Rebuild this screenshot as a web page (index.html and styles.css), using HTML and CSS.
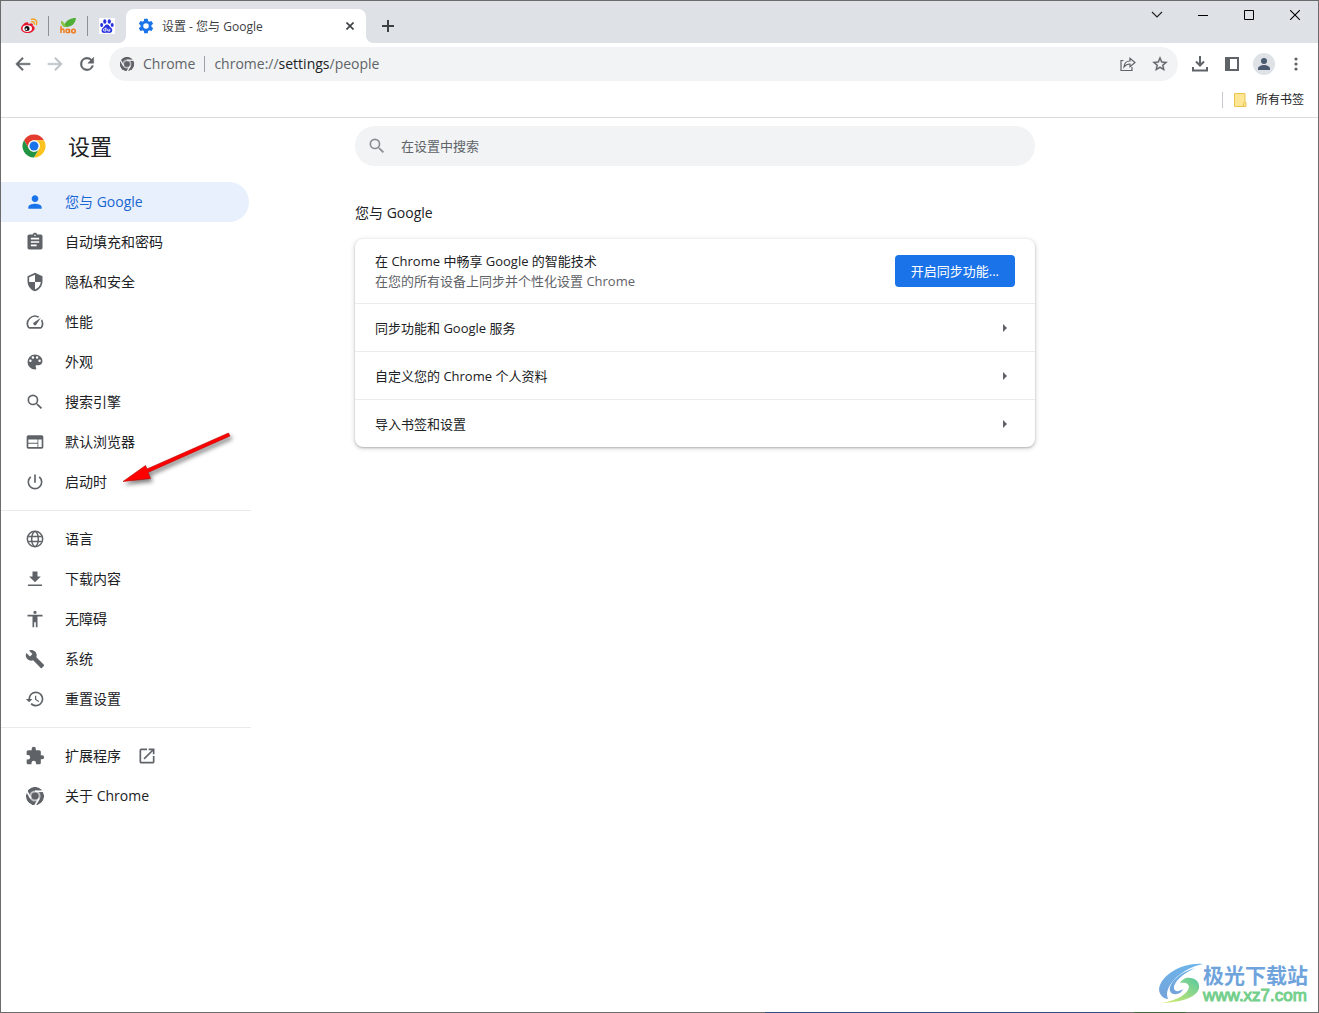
FILE: index.html
```html
<!DOCTYPE html>
<html lang="zh-CN">
<head>
<meta charset="utf-8">
<title>设置 - 您与 Google</title>
<link rel="stylesheet" href="styles.css">
</head>
<body>
<div class="window">
  <header class="tabstrip">
    <div class="pinned">
      <button class="pin" aria-label="微博">
        <svg width="18" height="18" viewBox="0 0 18 18"><path d="M1 11.500c0-3 5-7.500 7-6 .8.500.3 1.500.3 1.500s3.800-1.500 4.500.2c.3.800-.2 1.600-.2 1.600 1.600.4 2 1.300 2 2.400 0 2.500-3 4.800-7 4.800-3.600 0-6.600-1.800-6.600-4.500z" fill="#e6162d"/><ellipse cx="7.300" cy="11.600" rx="4.700" ry="3.300" fill="#fff"/><circle cx="7" cy="11.600" r="2.500" fill="#111"/><circle cx="6.300" cy="12.200" r=".9" fill="#fff"/><path d="M11.500 2.200c4-1 6 2 4.800 5.500M11.800 4.800c2-.4 2.700.8 2.300 2.200" fill="none" stroke="#f5a01d" stroke-width="1.400" stroke-linecap="round"/></svg>
      </button>
      <button class="pin" aria-label="hao">
        <svg width="18" height="18" viewBox="0 0 18 18"><path d="M5 8c3-5 6-7 12-7-.5 5-4 9-10 9-3 0-4.500-2-5-6 2 .5 3 2 3 4z" fill="#4fae35"/><path d="M2 4c2.500.5 4 2.500 5 6-3 0-4.500-2-5-6z" fill="#8cc63f"/><path d="M2 9v7M2 13.500c0-2 3-2 3 0V16M10.500 12v4" fill="none" stroke="#f07c1e" stroke-width="1.500"/><circle cx="8.700" cy="14" r="1.700" fill="none" stroke="#f07c1e" stroke-width="1.500"/><circle cx="14.500" cy="14" r="1.800" fill="none" stroke="#f07c1e" stroke-width="1.500"/></svg>
      </button>
      <button class="pin" aria-label="百度">
        <svg width="16" height="16" viewBox="0 0 16 16"><rect width="16" height="16" rx="1" fill="#fff"/><g fill="#2932e1"><ellipse cx="5.800" cy="3.500" rx="1.600" ry="2.200"/><ellipse cx="10.300" cy="3.500" rx="1.600" ry="2.200"/><ellipse cx="2.700" cy="6.900" rx="1.500" ry="2"/><ellipse cx="13.200" cy="6.900" rx="1.500" ry="2"/><path d="M8 6.500c2 0 2.500 2 4 3.300 2.500 2.200 1 5.200-1.500 5.200-1.500 0-3.500-.4-5 0-2.800.4-4-3-1.500-5.200C5.500 8.500 6 6.500 8 6.500z"/></g><path d="M7 9.500V13H5.500a1 1 0 0 1 0-2.200H7M8.800 10.800V13h2v-2.200" fill="none" stroke="#fff" stroke-width=".9"/></svg>
      </button>
    </div>
    <div class="tab">
      <svg class="tab-icon" width="16" height="16" viewBox="1 1 22 22"><path fill="#1a73e8" d="M19.400 13c0-.3.100-.6.100-1s0-.7-.1-1l2.100-1.600c.2-.2.200-.4.100-.7l-2-3.400c-.1-.2-.4-.3-.6-.2l-2.500 1c-.5-.4-1.100-.7-1.700-1l-.4-2.600c0-.3-.2-.5-.5-.5h-4c-.2 0-.5.200-.5.500L9.100 5.100c-.6.300-1.200.6-1.700 1l-2.500-1c-.2-.1-.5 0-.6.200l-2 3.400c-.1.300-.1.500.1.700L4.600 11c0 .3-.1.700-.1 1s0 .7.100 1l-2.200 1.600c-.1.200-.2.400-.1.700l2 3.400c.1.200.4.300.6.200l2.500-1c.5.400 1.100.7 1.700 1l.3 2.600c.1.300.3.500.6.500h4c.2 0 .5-.2.500-.5l.4-2.600c.6-.3 1.200-.6 1.700-1l2.500 1c.2.100.5 0 .6-.2l2-3.400c.1-.3.100-.5-.1-.7zM12 15.800a3.800 3.800 0 1 1 0-7.600 3.800 3.800 0 0 1 0 7.600z"/></svg>
      <span class="tab-title">设置 - 您与 Google</span>
      <button class="tab-close" aria-label="关闭标签页"><svg width="8" height="8" viewBox="0 0 8 8"><path d="M.5.5l7 7M7.500.5l-7 7" stroke="#3c4043" stroke-width="1.600"/></svg></button>
    </div>
    <button class="new-tab" aria-label="新标签页"><svg width="12" height="12" viewBox="0 0 12 12"><path d="M6 0v12M0 6h12" stroke="#3c4043" stroke-width="2"/></svg></button>
    <div class="controls">
      <button aria-label="搜索标签页"><svg width="12" height="8" viewBox="0 0 12 8"><path d="M1 1l5 5 5-5" fill="none" stroke="#222" stroke-width="1.200"/></svg></button>
      <button aria-label="最小化"><svg width="10" height="10" viewBox="0 0 10 10"><path d="M0 5.500h10" stroke="#000"/></svg></button>
      <button aria-label="最大化"><svg width="10" height="10" viewBox="0 0 10 10"><path d="M.5.5h9v9h-9z" fill="none" stroke="#000"/></svg></button>
      <button aria-label="关闭"><svg width="10" height="10" viewBox="0 0 10 10"><path d="M0 0l10 10M10 0L0 10" stroke="#000" stroke-width="1.100"/></svg></button>
    </div>
  </header>

  <div class="toolbar">
    <button class="tool" aria-label="后退"><svg width="20" height="20" viewBox="0 0 24 24"><path fill="#5f6368" stroke="#5f6368" stroke-width=".5" d="M20.500 11H7l5.600-5.600L11.200 4l-8 8 8 8 1.400-1.400L7 13h13.500z"/></svg></button>
    <button class="tool" aria-label="前进"><svg width="20" height="20" viewBox="0 0 24 24"><path fill="#bdc1c6" stroke="#bdc1c6" stroke-width=".5" d="M3.500 11H17l-5.600-5.600L12.800 4l8 8-8 8-1.400-1.400L17 13H3.500z"/></svg></button>
    <button class="tool" aria-label="重新加载"><svg width="20" height="20" viewBox="0 0 24 24"><path fill="#5f6368" stroke="#5f6368" stroke-width=".6" d="M17.650 6.350A7.958 7.958 0 0 0 12 4a8 8 0 1 0 7.730 10h-2.080A6 6 0 1 1 12 6c1.660 0 3.140.69 4.220 1.780L13 11h7V4z"/></svg></button>
    <div class="omnibox">
      <svg width="16" height="16" viewBox="0 0 24 24"><use href="#chrome-mono"/></svg>
      <span class="chip">Chrome</span>
      <div class="address"><span class="url">chrome://<b>settings</b>/people</span></div>
      <button class="tool" aria-label="分享"><svg width="16" height="16" viewBox="0 0 16 16"><path d="M3.500 4.500H1v10h11V11M4 11c.3-4 2.500-6 6-6V2.300l5 4.200-5 4.200V8C7 8 5.500 9 4 11z" fill="none" stroke="#5f6368" stroke-width="1.200"/></svg></button>
      <button class="tool" aria-label="收藏"><svg width="18" height="18" viewBox="0 0 24 24"><path fill="#5f6368" stroke="#5f6368" stroke-width=".4" d="M22 9.240l-7.190-.62L12 2 9.190 8.630 2 9.240l5.460 4.730L5.820 21 12 17.270 18.180 21l-1.630-7.030zM12 15.400l-3.760 2.270 1-4.280-3.320-2.880 4.380-.38L12 6.100l1.710 4.040 4.380.38-3.320 2.880 1 4.280z"/></svg></button>
    </div>
    <button class="tool" aria-label="下载"><svg width="18" height="18" viewBox="0 0 18 18"><path d="M9 1v9M5 6.500l4 4 4-4M2 12v3.500h14V12" fill="none" stroke="#5f6368" stroke-width="2"/></svg></button>
    <button class="tool" aria-label="侧边栏"><svg width="14" height="14" viewBox="0 0 14 14"><path d="M1 1h12v12H1z" fill="none" stroke="#5f6368" stroke-width="2"/><path d="M0 0h5v14H0z" fill="#5f6368"/></svg></button>
    <button class="tool" aria-label="个人资料"><svg width="22" height="22" viewBox="0 0 22 22"><circle cx="11" cy="11" r="11" fill="#dee1e6"/><circle cx="11" cy="8" r="3" fill="#4b5a70"/><path d="M5 17v-1.500c0-2.300 3.500-3.500 6-3.500s6 1.200 6 3.500V17z" fill="#4b5a70"/></svg></button>
    <button class="tool" aria-label="更多"><svg width="4" height="14" viewBox="0 0 4 14"><g fill="#5f6368"><circle cx="2" cy="2" r="1.600"/><circle cx="2" cy="7" r="1.600"/><circle cx="2" cy="12" r="1.600"/></g></svg></button>
  </div>

  <div class="bookmarks">
    <button class="all-bookmarks"><svg width="13" height="14" viewBox="0 0 13 14"><path d="M.5.500h10.500v9h1v4H.5z" fill="#ffe694" stroke="#eac54f"/><path d="M9.500 13V10.500q0-1 1.200-1" fill="none" stroke="#eac54f"/></svg>所有书签</button>
  </div>

  <div class="page">
    <aside class="sidebar">
      <div class="brand">
        <svg width="24" height="24" viewBox="0 0 48 48"><circle cx="24" cy="24" r="23" fill="#fff"/><path d="M4.080 12.500A23 23 0 0 1 43.920 12.500H24A11.500 11.500 0 0 0 14.040 29.750z" fill="#e33b2e"/><path d="M43.920 12.500A23 23 0 0 1 24 47l9.960-17.250A11.500 11.500 0 0 0 24 12.500z" fill="#fcc31e"/><path d="M24 47A23 23 0 0 1 4.080 12.500l9.960 17.250a11.500 11.500 0 0 0 19.920 0z" fill="#229342"/><circle cx="24" cy="24" r="11.500" fill="#fff"/><circle cx="24" cy="24" r="9" fill="#1a73e8"/></svg>
        <h1>设置</h1>
      </div>
      <nav>
        <a class="item active" href="#people"><svg viewBox="0 0 24 24"><path d="M12 12c2.200 0 4-1.800 4-4s-1.800-4-4-4-4 1.800-4 4 1.800 4 4 4zm0 2c-2.700 0-8 1.300-8 4v2h16v-2c0-2.700-5.300-4-8-4z"/></svg><span>您与 <b>Google</b></span></a>
        <a class="item" href="#autofill"><svg viewBox="0 0 24 24"><path d="M19 3h-4.200C14.400 1.800 13.300 1 12 1s-2.400.8-2.800 2H5c-1.100 0-2 .9-2 2v14c0 1.100.9 2 2 2h14c1.100 0 2-.9 2-2V5c0-1.100-.9-2-2-2zm-7 0c.6 0 1 .4 1 1s-.4 1-1 1-1-.4-1-1 .4-1 1-1zm2 14H7v-2h7zm3-4H7v-2h10zm0-4H7V7h10z"/></svg>自动填充和密码</a>
        <a class="item" href="#privacy"><svg viewBox="0 0 24 24"><path d="M12 1L3 5v6c0 5.550 3.840 10.740 9 12 5.160-1.260 9-6.450 9-12V5zm0 10.990h7c-.53 4.120-3.280 7.790-7 8.940V12H5V6.300l7-3.110z"/></svg>隐私和安全</a>
        <a class="item" href="#performance"><svg viewBox="0 0 24 24"><path d="M20.380 8.570l-1.230 1.850a8 8 0 0 1-.22 7.580H5.070A8 8 0 0 1 15.580 6.850l1.850-1.230A10 10 0 0 0 3.350 19a2 2 0 0 0 1.720 1h13.850a2 2 0 0 0 1.740-1 10 10 0 0 0-.27-10.440zm-9.790 6.840a2 2 0 0 0 2.830 0l5.660-8.490-8.490 5.660a2 2 0 0 0 0 2.830z"/></svg>性能</a>
        <a class="item" href="#appearance"><svg viewBox="0 0 24 24"><path d="M12 3a9 9 0 0 0 0 18c.83 0 1.500-.67 1.500-1.500 0-.39-.15-.74-.39-1.010-.23-.26-.38-.61-.38-.99 0-.83.67-1.500 1.500-1.500H16c2.760 0 5-2.240 5-5 0-4.420-4.030-8-9-8zm-5.500 9a1.500 1.500 0 1 1 0-3 1.500 1.500 0 0 1 0 3zm3-4a1.500 1.500 0 1 1 0-3 1.500 1.500 0 0 1 0 3zm5 0a1.500 1.500 0 1 1 0-3 1.500 1.500 0 0 1 0 3zm3 4a1.500 1.500 0 1 1 0-3 1.500 1.500 0 0 1 0 3z"/></svg>外观</a>
        <a class="item" href="#search"><svg viewBox="0 0 24 24"><path id="magnifier" d="M15.500 14h-.79l-.28-.27A6.471 6.471 0 0 0 16 9.500 6.500 6.500 0 1 0 9.500 16c1.610 0 3.090-.59 4.230-1.570l.27.280v.79l5 4.990L20.490 19zm-6 0a4.500 4.500 0 1 1 0-9 4.500 4.500 0 0 1 0 9z"/></svg>搜索引擎</a>
        <a class="item" href="#default-browser"><svg viewBox="0 0 24 24"><path d="M20 4H4c-1.100 0-2 .9-2 2v12c0 1.100.9 2 2 2h16c1.100 0 2-.9 2-2V6c0-1.100-.9-2-2-2zm-5 14H4v-4h11zm0-5H4V9h11zm5 5h-4V9h4z"/></svg>默认浏览器</a>
        <a class="item" href="#startup"><svg viewBox="0 0 24 24"><path d="M13 3h-2v10h2zm4.830 2.170l-1.420 1.420A6.920 6.920 0 0 1 19 12a7 7 0 1 1-11.420-5.420L6.170 5.170A8.932 8.932 0 0 0 3 12a9 9 0 0 0 18 0 8.932 8.932 0 0 0-3.170-6.830z"/></svg>启动时</a>
        <hr>
        <a class="item" href="#languages"><svg viewBox="0 0 24 24"><g fill="none" stroke="#5f6368" stroke-width="1.800"><circle cx="12" cy="12" r="9.200"/><ellipse cx="12" cy="12" rx="4" ry="9"/><path d="M4 9h16M4 15h16"/></g></svg>语言</a>
        <a class="item" href="#downloads"><svg viewBox="0 0 24 24"><path d="M19 9h-4V3H9v6H5l7 7zM3.500 18.500v2h17v-2z"/></svg>下载内容</a>
        <a class="item" href="#accessibility"><svg viewBox="0 0 24 24"><path d="M12 2a2 2 0 1 1 0 4 2 2 0 0 1 0-4zm9 7h-6v13h-2v-6h-2v6H9V9H3V7h18z"/></svg>无障碍</a>
        <a class="item" href="#system"><svg viewBox="0 0 24 24"><path d="M22.700 19l-9.100-9.100c.9-2.300.4-5-1.500-6.900-2-2-5-2.400-7.400-1.300L9 6 6 9 1.600 4.700C.4 7.100.9 10.100 2.900 12.100c1.900 1.900 4.600 2.400 6.900 1.500l9.100 9.100c.4.400 1 .4 1.400 0l2.300-2.300c.5-.4.5-1.100.1-1.400z"/></svg>系统</a>
        <a class="item" href="#reset"><svg viewBox="0 0 24 24"><path d="M13 3a9 9 0 0 0-9 9H1l3.890 3.890.070.140L9 12H6a7 7 0 1 1 2.060 4.940l-1.420 1.420A9 9 0 1 0 13 3zm-1 5v5l4.280 2.540.72-1.210-3.500-2.080V8z"/></svg>重置设置</a>
        <hr>
        <a class="item" href="#extensions"><svg viewBox="0 0 24 24"><path d="M20.500 11H19V7c0-1.100-.9-2-2-2h-4V3.500a2.500 2.500 0 0 0-5 0V5H4c-1.100 0-1.990.9-1.990 2v3.800H3.500a2.700 2.700 0 0 1 0 5.400H2V20c0 1.100.9 2 2 2h3.800v-1.500a2.700 2.700 0 0 1 5.400 0V22H17c1.100 0 2-.9 2-2v-4h1.500a2.500 2.500 0 0 0 0-5z"/></svg>扩展程序<svg class="external" viewBox="0 0 24 24"><path d="M19 19H5V5h7V3H5a2 2 0 0 0-2 2v14a2 2 0 0 0 2 2h14c1.100 0 2-.9 2-2v-7h-2zM14 3v2h3.590l-9.830 9.830 1.410 1.410L19 6.410V10h2V3z"/></svg></a>
        <a class="item" href="#about"><svg viewBox="0 0 24 24"><mask id="segments"><circle cx="12" cy="12" r="11" fill="#fff"/><circle cx="12" cy="12" r="6.700"/><g stroke="#000" stroke-width="2"><path d="M12 6.300h12"/><path d="M12 6.300h12" transform="rotate(120 12 12)"/><path d="M12 6.300h12" transform="rotate(240 12 12)"/></g><circle cx="12" cy="12" r="4.300" fill="#fff"/></mask><g id="chrome-mono"><circle cx="12" cy="12" r="11" fill="#5f6368" mask="url(#segments)"/></g></svg><span>关于 <b>Chrome</b></span></a>
      </nav>
    </aside>

    <main>
      <label class="search">
        <svg width="20" height="20" viewBox="0 0 24 24" fill="#8a8d91"><use href="#magnifier"/></svg>
        <input type="search" placeholder="在设置中搜索" aria-label="在设置中搜索">
      </label>
      <h2>您与 Google</h2>
      <section class="card">
        <div class="row sync">
          <div class="sync-text">
            <div>在 Chrome 中畅享 Google 的智能技术</div>
            <div class="secondary">在您的所有设备上同步并个性化设置 Chrome</div>
          </div>
          <button class="primary">开启同步功能...</button>
        </div>
        <a class="row" href="#sync">同步功能和 Google 服务<span class="caret"></span></a>
        <a class="row" href="#profile">自定义您的 Chrome 个人资料<span class="caret"></span></a>
        <a class="row" href="#import">导入书签和设置<span class="caret"></span></a>
      </section>
    </main>
  </div>

  <svg class="pointer" width="124" height="66" viewBox="0 0 124 66"><path d="M109.500 4L28 40l-1.500-3.500L4 52.500l27.500-3-2.500-6L111 7z" fill="#f00" stroke="#b80000" stroke-width=".6" stroke-linejoin="round"/></svg>

  <div class="watermark">
    <svg width="44" height="42" viewBox="0 0 44 42"><defs><linearGradient id="sky" x2="0" y2="1"><stop stop-color="#6cb4ea"/><stop offset="1" stop-color="#74a2da"/></linearGradient><linearGradient id="leaf" x1="1" x2="0" y2="1"><stop stop-color="#58c8a0"/><stop offset="1" stop-color="#d8ec6a"/></linearGradient></defs><path d="M44 1C25-1 2 11 0 26c0 6 5 10 9 10C4 25 20 6 44 1z" fill="url(#sky)"/><path d="M37 5C22 8 9 20 11 28c2 5 11 4 13-2-4 3-9 3-9-1C15 18 26 9 37 5z" fill="url(#sky)"/><path d="M27 15c8-1 14 3 13 10-2 9-16 14-37 15 16-3 26-9 27-16 0-4-5-5-9-4 1-2 3-4 6-5z" fill="url(#leaf)"/></svg>
    <div><div class="site">极光下载站</div><div class="domain">www.xz7.com</div></div>
  </div>
</div>
</body>
</html>
```
FILE: styles.css
```css
* { box-sizing: border-box; }
body {
  margin: 0;
  background: #fff;
  color: #202124;
  font: 13px/20px "Open Sans", "Noto Sans CJK SC", sans-serif;
}
button {
  display: flex;
  align-items: center;
  justify-content: center;
  padding: 0;
  border: 0;
  background: none;
  color: inherit;
  font: inherit;
}
a { color: inherit; text-decoration: none; }
svg { display: block; flex: none; }

.window {
  position: relative;
  display: flex;
  flex-direction: column;
  min-height: 100vh;
  border: 1px solid #6b6b6b;
}
.window::after {
  content: "";
  position: absolute;
  right: 0;
  bottom: -1px;
  left: 0;
  height: 1px;
  background: linear-gradient(90deg, transparent 58%, #2c4f7c 58%, #2c4f7c 85%, transparent 85%, transparent 86%, #3f6b3c 86%, #3f6b3c 90%, transparent 90%);
}

.tabstrip {
  display: flex;
  height: 42px;
  padding-left: 9px;
  background: #dee1e6;
}
.pinned { display: flex; align-items: center; padding-top: 8px; }
.pin { width: 38px; height: 20px; }
.pin + .pin { width: 39px; border-left: 1px solid #8c8f94; }
.tab {
  position: relative;
  display: flex;
  align-items: center;
  width: 240px;
  margin-top: 8px;
  padding: 0 10px 0 12px;
  border-radius: 8px 8px 0 0;
  background: #fff;
  font-size: 12px;
}
.tab::before, .tab::after {
  content: "";
  position: absolute;
  bottom: 0;
  width: 8px;
  height: 8px;
}
.tab::before { right: 100%; background: radial-gradient(circle at 0 0, transparent 8px, #fff 8px); }
.tab::after { left: 100%; background: radial-gradient(circle at 100% 0, transparent 8px, #fff 8px); }
.tab-icon { margin-right: 8px; }
.tab-title { flex: 1; padding-top: 2px; color: #3c4043; }
.tab-close { width: 12px; height: 16px; }
.new-tab { width: 28px; margin: 8px 0 0 8px; }
.controls { display: flex; height: 28px; margin-left: auto; }
.controls button { width: 46px; }

.toolbar { display: flex; align-items: center; height: 42px; padding: 0 6px; }
.tool { width: 32px; height: 32px; }
.omnibox {
  display: flex;
  flex: 1;
  align-items: center;
  height: 34px;
  margin: 0 6px;
  padding: 0 2px 0 10px;
  border-radius: 17px;
  background: #f1f3f4;
  color: #5f6368;
  font-size: 14px;
}
.chip { margin-left: 8px; padding-right: 9px; }
.address { flex: 1; }
.url { display: block; padding-left: 9px; border-left: 1px solid #9aa0a6; line-height: 16px; }
.url b { color: #202124; font-weight: 400; }

.bookmarks {
  display: flex;
  align-items: center;
  justify-content: flex-end;
  height: 33px;
  padding: 0 14px 3px 0;
  border-bottom: 1px solid #dadce0;
}
.all-bookmarks { gap: 9px; height: 16px; padding-left: 11px; border-left: 1px solid #c8cbcf; font-size: 12px; }

.page { display: flex; flex: 1; }
.sidebar { flex: none; width: 250px; }
.brand { display: flex; align-items: center; gap: 22px; height: 56px; margin-bottom: 8px; padding-left: 21px; }
h1 { margin: 0; font-size: 22px; font-weight: 400; line-height: 32px; }
.item {
  display: flex;
  align-items: center;
  gap: 20px;
  height: 40px;
  margin-right: 2px;
  padding-left: 24px;
  border-radius: 0 20px 20px 0;
  font-size: 14px;
}
.item b { font-weight: 500; }
.item svg { width: 20px; height: 20px; fill: #5f6368; }
.item .external { margin-left: -4px; }
.active { background: #e8f0fe; color: #1967d2; }
.active svg { fill: #1a73e8; }
hr { height: 1px; margin: 8px 0; border: 0; background: #e8eaed; }

main { flex: 1; max-width: 784px; padding: 8px 0 24px 104px; }
.search {
  display: flex;
  align-items: center;
  gap: 14px;
  height: 40px;
  padding: 0 12px;
  border-radius: 20px;
  background: #f1f3f4;
}
.search input {
  flex: 1;
  min-width: 0;
  padding: 0;
  border: 0;
  outline: 0;
  background: none;
  font: inherit;
}
.search input::placeholder { color: #5f6368; opacity: 1; }
h2 { margin: 37px 0 16px; font-size: 14px; font-weight: 400; line-height: 20px; }
.card {
  border-radius: 8px;
  box-shadow: 0 1px 2px rgba(60, 64, 67, .3), 0 1px 4px 1px rgba(60, 64, 67, .16);
}
.row {
  display: flex;
  align-items: center;
  justify-content: space-between;
  height: 48px;
  padding: 0 20px;
  border-top: 1px solid #ebebeb;
}
.sync { height: 64px; border-top: 0; }
.secondary { color: #5f6368; }
.primary { height: 32px; padding: 0 16px; border-radius: 4px; background: #1a73e8; color: #fff; }
.caret { margin-right: 8px; border: solid transparent; border-width: 4px 0 4px 4px; border-left-color: #5f6368; }

.pointer { position: absolute; top: 428px; left: 118px; filter: drop-shadow(2px 3px 2px rgba(0, 0, 0, .5)); }
.watermark { position: absolute; right: 10px; bottom: 6px; display: flex; align-items: center; }
.site { color: #6fa3dc; font: 700 21px/24px "Noto Sans CJK SC", sans-serif; }
.domain { color: #74cf8c; font: 17px/20px "Liberation Sans", sans-serif; -webkit-text-stroke: 1px #74cf8c; }
```
